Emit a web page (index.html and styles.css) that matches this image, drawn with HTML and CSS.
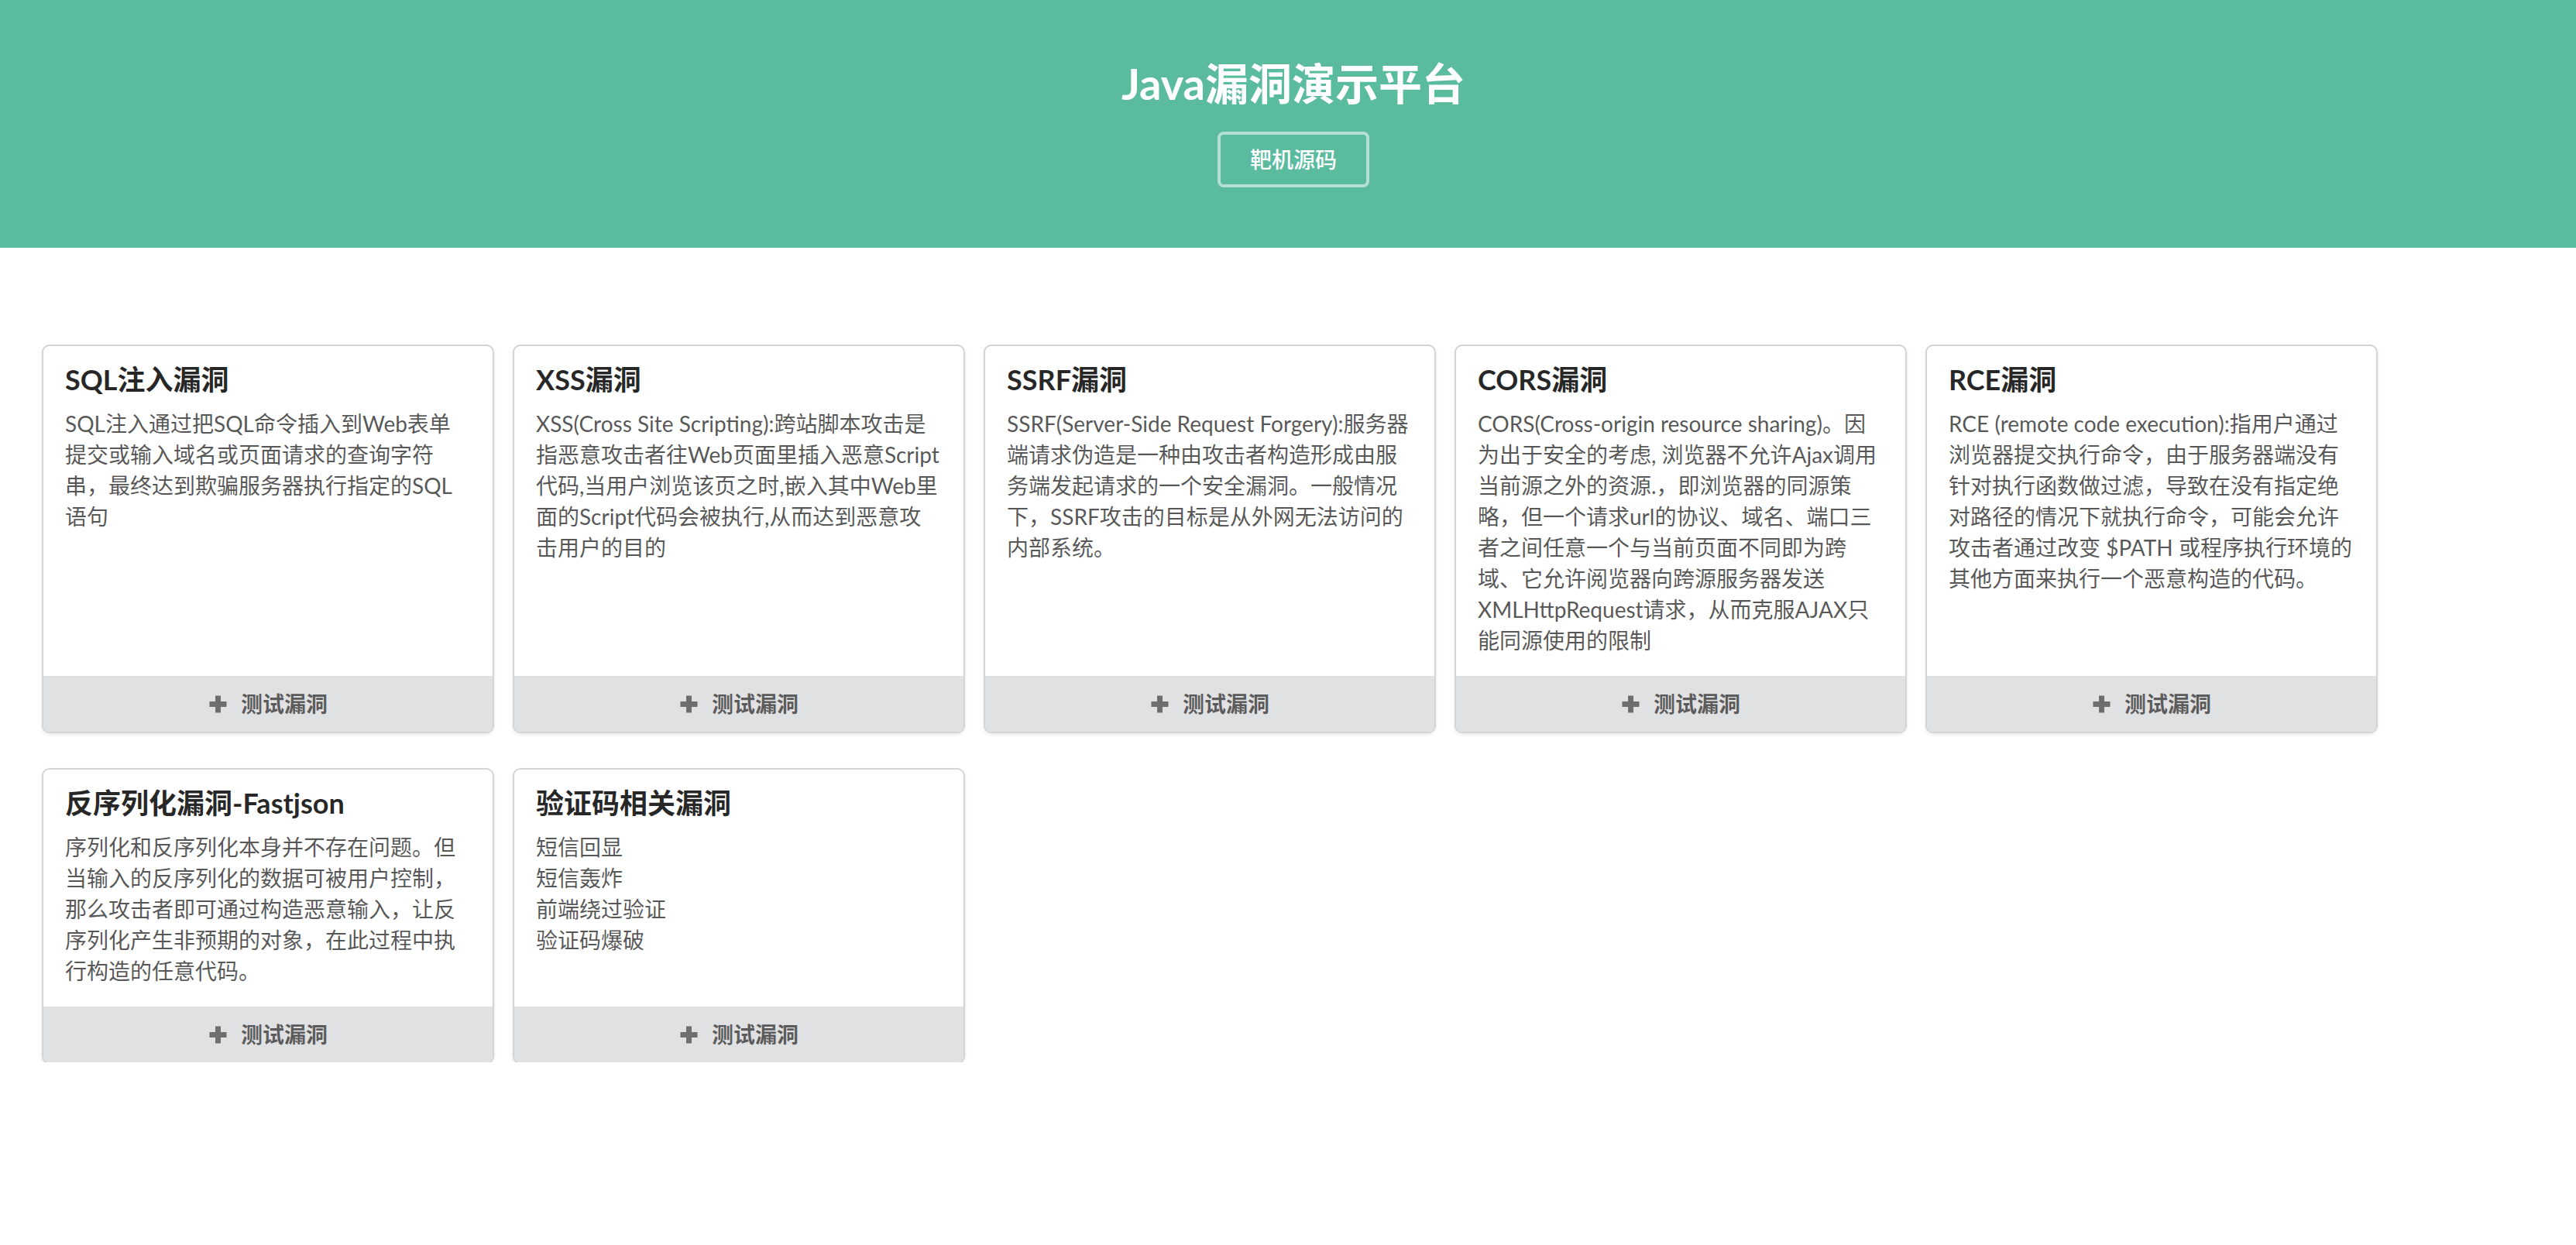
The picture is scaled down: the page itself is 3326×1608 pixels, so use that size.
FILE: index.html
```html
<!DOCTYPE html>
<html lang="zh-CN">
<head>
<meta charset="utf-8">
<title>Java漏洞演示平台</title>
<link rel="stylesheet" href="styles.css">
</head>
<body>
<header class="masthead">
  <h1 class="masthead-title">Java漏洞演示平台</h1>
  <a class="source-btn" href="#">靶机源码</a>
</header>
<main class="cards">
  <div class="card">
    <div class="content">
      <div class="card-header">SQL注入漏洞</div>
      <div class="description">SQL注入通过把SQL命令插入到Web表单提交或输入域名或页面请求的查询字符串，最终达到欺骗服务器执行指定的SQL语句</div>
    </div>
    <a class="test-btn" href="#"><svg class="plus" viewBox="0 0 25 25"><path d="M9 1.5h7v7.5h7.5v7h-7.5v7.5h-7v-7.5h-7.5v-7h7.5z" fill="currentColor"/></svg>测试漏洞</a>
  </div>
  <div class="card">
    <div class="content">
      <div class="card-header">XSS漏洞</div>
      <div class="description">XSS(Cross Site Scripting):跨站脚本攻击是指恶意攻击者往Web页面里插入恶意Script代码,当用户浏览该页之时,嵌入其中Web里面的Script代码会被执行,从而达到恶意攻击用户的目的</div>
    </div>
    <a class="test-btn" href="#"><svg class="plus" viewBox="0 0 25 25"><path d="M9 1.5h7v7.5h7.5v7h-7.5v7.5h-7v-7.5h-7.5v-7h7.5z" fill="currentColor"/></svg>测试漏洞</a>
  </div>
  <div class="card">
    <div class="content">
      <div class="card-header">SSRF漏洞</div>
      <div class="description">SSRF(Server-Side Request Forgery):服务器端请求伪造是一种由攻击者构造形成由服务端发起请求的一个安全漏洞。一般情况下，SSRF攻击的目标是从外网无法访问的内部系统。</div>
    </div>
    <a class="test-btn" href="#"><svg class="plus" viewBox="0 0 25 25"><path d="M9 1.5h7v7.5h7.5v7h-7.5v7.5h-7v-7.5h-7.5v-7h7.5z" fill="currentColor"/></svg>测试漏洞</a>
  </div>
  <div class="card">
    <div class="content">
      <div class="card-header">CORS漏洞</div>
      <div class="description">CORS(Cross-origin resource sharing)。因为出于安全的考虑, 浏览器不允许Ajax调用当前源之外的资源.，即浏览器的同源策略，但一个请求url的协议、域名、端口三者之间任意一个与当前页面不同即为跨域、它允许阅览器向跨源服务器发送XMLHttpRequest请求，从而克服AJAX只能同源使用的限制</div>
    </div>
    <a class="test-btn" href="#"><svg class="plus" viewBox="0 0 25 25"><path d="M9 1.5h7v7.5h7.5v7h-7.5v7.5h-7v-7.5h-7.5v-7h7.5z" fill="currentColor"/></svg>测试漏洞</a>
  </div>
  <div class="card">
    <div class="content">
      <div class="card-header">RCE漏洞</div>
      <div class="description">RCE (remote code execution):指用户通过浏览器提交执行命令，由于服务器端没有针对执行函数做过滤，导致在没有指定绝对路径的情况下就执行命令，可能会允许攻击者通过改变 $PATH 或程序执行环境的其他方面来执行一个恶意构造的代码。</div>
    </div>
    <a class="test-btn" href="#"><svg class="plus" viewBox="0 0 25 25"><path d="M9 1.5h7v7.5h7.5v7h-7.5v7.5h-7v-7.5h-7.5v-7h7.5z" fill="currentColor"/></svg>测试漏洞</a>
  </div>
  <div class="card">
    <div class="content">
      <div class="card-header">反序列化漏洞-Fastjson</div>
      <div class="description">序列化和反序列化本身并不存在问题。但当输入的反序列化的数据可被用户控制，那么攻击者即可通过构造恶意输入，让反序列化产生非预期的对象，在此过程中执行构造的任意代码。</div>
    </div>
    <a class="test-btn" href="#"><svg class="plus" viewBox="0 0 25 25"><path d="M9 1.5h7v7.5h7.5v7h-7.5v7.5h-7v-7.5h-7.5v-7h7.5z" fill="currentColor"/></svg>测试漏洞</a>
  </div>
  <div class="card">
    <div class="content">
      <div class="card-header">验证码相关漏洞</div>
      <div class="description">短信回显<br>短信轰炸<br>前端绕过验证<br>验证码爆破</div>
    </div>
    <a class="test-btn" href="#"><svg class="plus" viewBox="0 0 25 25"><path d="M9 1.5h7v7.5h7.5v7h-7.5v7.5h-7v-7.5h-7.5v-7h7.5z" fill="currentColor"/></svg>测试漏洞</a>
  </div>
</main>
</body>
</html>
```

FILE: styles.css
```css
* {
  box-sizing: border-box;
}

html, body {
  margin: 0;
  padding: 0;
  background: #ffffff;
}

body {
  font-family: Lato, "Noto Sans CJK SC", "Helvetica Neue", Arial, sans-serif;
  font-size: 28px;
  line-height: 40px;
  color: rgba(0, 0, 0, 0.87);
}

a {
  text-decoration: none;
}

.masthead {
  background: #5abb9f;
  height: 320px;
  padding: 72px 0 0 14px;
  text-align: center;
}

.masthead-title {
  margin: 0;
  font-size: 56px;
  line-height: 72px;
  font-weight: 700;
  color: #ffffff;
}

.source-btn {
  display: inline-block;
  margin-top: 26px;
  padding: 18px 38px;
  font-size: 28px;
  line-height: 28px;
  font-weight: 500;
  color: #ffffff;
  border: 4px solid rgba(255, 255, 255, 0.55);
  border-radius: 8px;
}

.cards {
  display: grid;
  grid-template-columns: repeat(5, 580px);
  column-gap: 28px;
  row-gap: 49px;
  padding: 127px 0 0 56px;
  align-items: stretch;
}

.card {
  display: flex;
  flex-direction: column;
  background: #ffffff;
  border-radius: 8px;
  box-shadow: 0 2px 6px 0 #d4d4d5, 0 0 0 2px #d4d4d5;
  overflow: hidden;
}

.content {
  flex: 1 1 auto;
  padding: 28px 28px 26px 28px;
}

.card-header {
  margin-top: -8px;
  font-size: 36px;
  line-height: 46px;
  font-weight: 700;
  color: rgba(0, 0, 0, 0.85);
}

.description {
  margin-top: 14px;
  font-size: 28px;
  line-height: 40px;
  color: rgba(0, 0, 0, 0.68);
}

.test-btn {
  display: flex;
  align-items: center;
  justify-content: center;
  height: 72px;
  background: #e0e1e2;
  color: rgba(0, 0, 0, 0.6);
  font-size: 28px;
  line-height: 28px;
  font-weight: 700;
}

.plus {
  width: 25px;
  height: 25px;
  margin-right: 17px;
  opacity: 0.85;
}
```
